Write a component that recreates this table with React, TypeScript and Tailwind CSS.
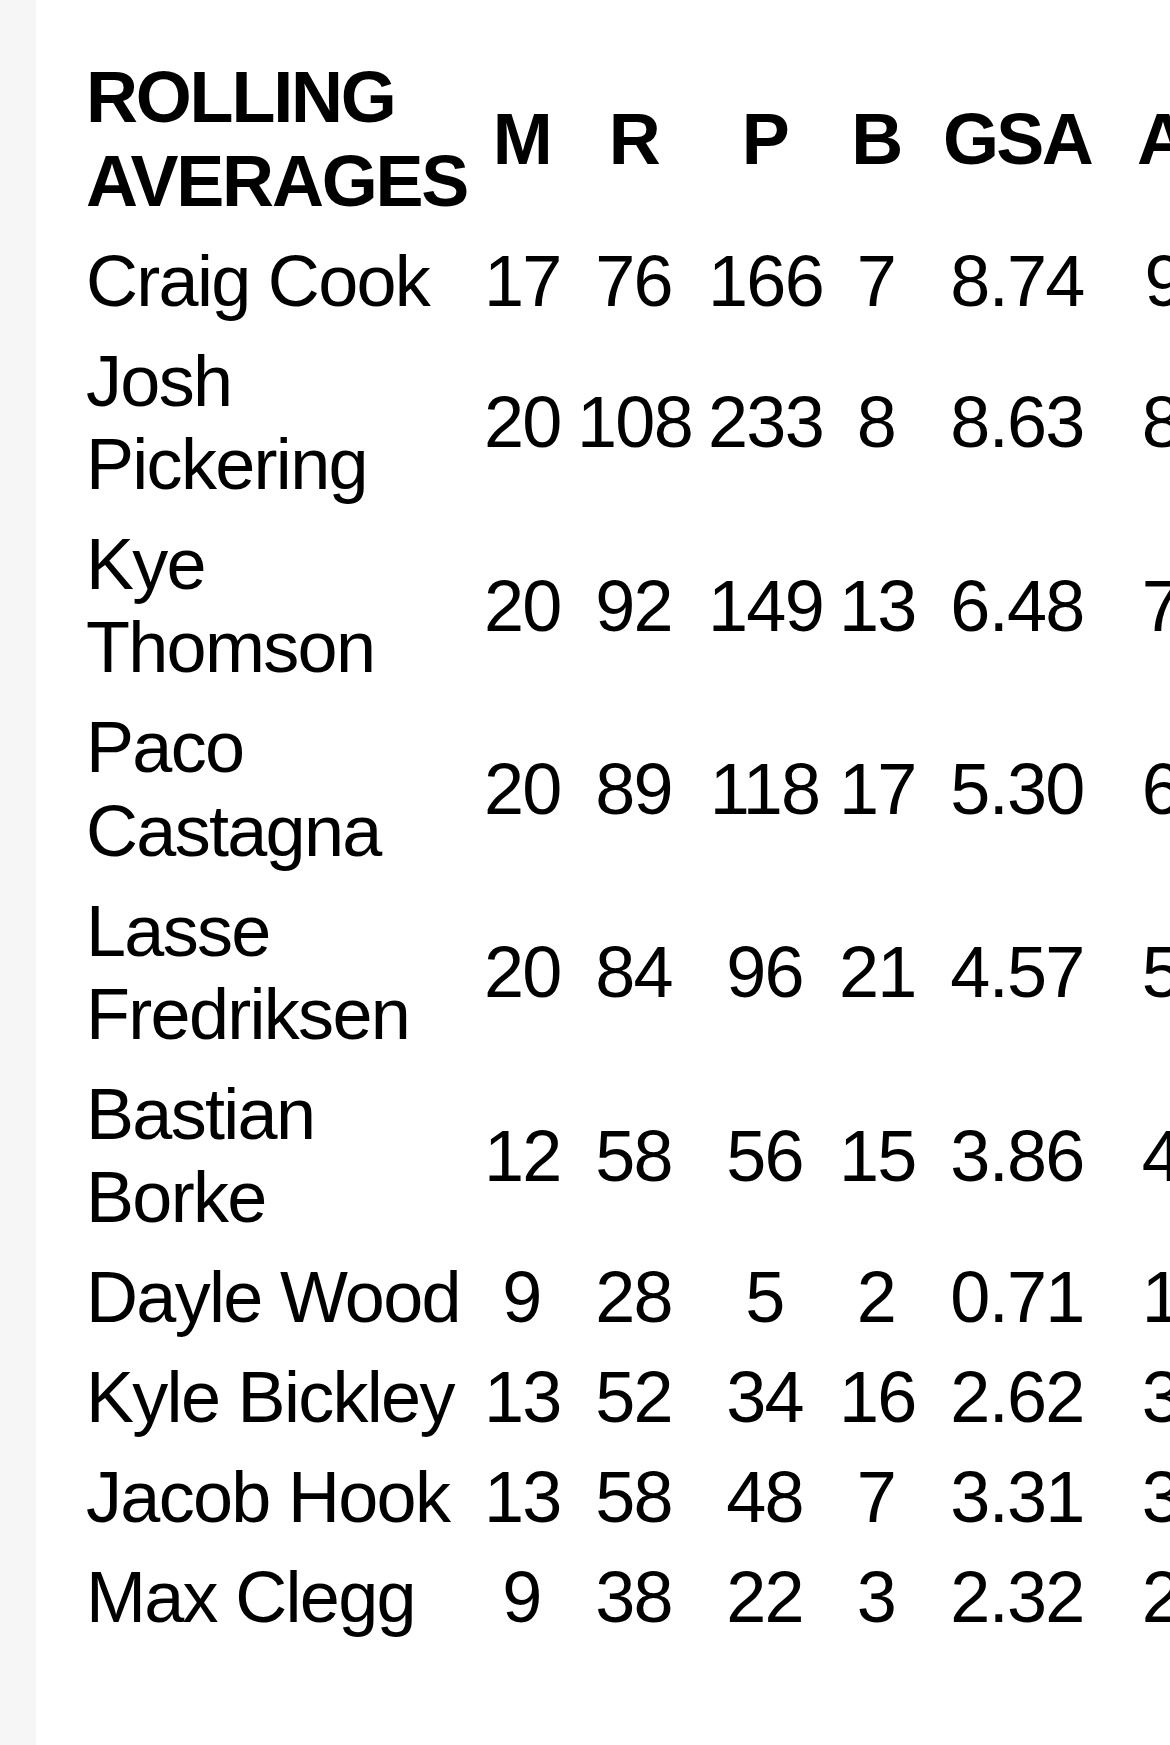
const rows = [
    { name: "Craig Cook", m: "17", r: "76", p: "166", b: "7", gsa: "8.74", avg: "9.11" },
    { name: "Josh Pickering", m: "20", r: "108", p: "233", b: "8", gsa: "8.63", avg: "8.93" },
    { name: "Kye Thomson", m: "20", r: "92", p: "149", b: "13", gsa: "6.48", avg: "7.04" },
    { name: "Paco Castagna", m: "20", r: "89", p: "118", b: "17", gsa: "5.30", avg: "6.07" },
    { name: "Lasse Fredriksen", m: "20", r: "84", p: "96", b: "21", gsa: "4.57", avg: "5.57" },
    { name: "Bastian Borke", m: "12", r: "58", p: "56", b: "15", gsa: "3.86", avg: "4.90" },
    { name: "Dayle Wood", m: "9", r: "28", p: "5", b: "2", gsa: "0.71", avg: "1.00" },
    { name: "Kyle Bickley", m: "13", r: "52", p: "34", b: "16", gsa: "2.62", avg: "3.85" },
    { name: "Jacob Hook", m: "13", r: "58", p: "48", b: "7", gsa: "3.31", avg: "3.79" },
    { name: "Max Clegg", m: "9", r: "38", p: "22", b: "3", gsa: "2.32", avg: "2.63" },
];

const cell = "px-[9px] py-[8.33px] align-middle";
const th = `${cell} font-bold tracking-[-2.6px] text-center`;
const td = `${cell} tracking-[-1.7px] text-center`;

export default function App() {
    return (
        <div className="flex min-h-[1745px] w-full overflow-hidden bg-white font-['Liberation_Sans',Arial,sans-serif] text-[72px] leading-[83.33px] text-black">
            <div className="w-[36px] shrink-0 bg-[#f6f6f6]" />
            <div className="min-w-0 flex-1 overflow-hidden pl-[41px] pt-[48px]">
                <table className="w-[1228px] table-fixed border-collapse">
                    <thead>
                        <tr>
                            <th className={`${cell} w-[398px] whitespace-normal text-left font-bold tracking-[-2.2px]`}>
                                ROLLING AVERAGES
                            </th>
                            <th className={`${th} w-[93px]`}>M</th>
                            <th className={`${th} w-[131px]`}>R</th>
                            <th className={`${th} w-[131px]`}>P</th>
                            <th className={`${th} w-[92px]`}>B</th>
                            <th className={`${th} w-[190px]`}>GSA</th>
                            <th className={`${th} w-[193px]`}>AVG</th>
                        </tr>
                    </thead>
                    <tbody>
                        {rows.map((row) => (
                            <tr key={row.name}>
                                <td className={`${cell} text-left tracking-[-1.7px]`}>{row.name}</td>
                                <td className={td}>{row.m}</td>
                                <td className={td}>{row.r}</td>
                                <td className={td}>{row.p}</td>
                                <td className={td}>{row.b}</td>
                                <td className={td}>{row.gsa}</td>
                                <td className={td}>{row.avg}</td>
                            </tr>
                        ))}
                    </tbody>
                </table>
            </div>
        </div>
    );
}
